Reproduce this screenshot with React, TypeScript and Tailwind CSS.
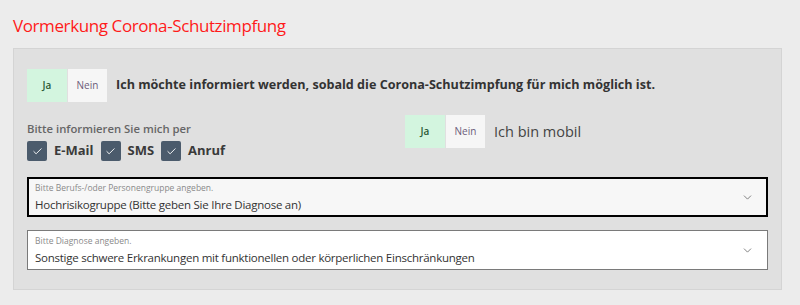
import { ChevronDown, Check } from "lucide-react";

const font = { fontFamily: '"Open Sans", "Noto Sans", sans-serif' };

const Toggle = () => (
  <div className="flex h-[33px] shrink-0">
    <button className="w-[40px] bg-[#d3f5df] text-[10px] font-semibold text-[#2d5a36]">Ja</button>
    <button className="ml-px w-[39px] bg-[#f6f6f6] text-[10px] text-[#6b5b7b]">Nein</button>
  </div>
);

const Box = ({ label }: { label: string }) => (
  <label className="flex items-center gap-[7px]">
    <span className="flex h-[20px] w-[20px] items-center justify-center rounded-[2px] bg-[#4b5b6c]">
      <Check className="h-[11px] w-[11px] text-white" strokeWidth={2} />
    </span>
    <span className="text-[13px] font-bold text-[#3a3a3a]">{label}</span>
  </label>
);

const Select = ({ label, value, focused }: { label: string; value: string; focused?: boolean }) => (
  <div
    className={
      focused
        ? "flex h-[40px] items-center border-2 border-black bg-[#f7f7f7] pl-[6px] pr-[12px]"
        : "flex h-[40px] items-center border border-[#7a7a7a] bg-white pl-[7px] pr-[13px]"
    }
  >
    <div className="flex flex-1 flex-col leading-none">
      <span className="text-[8.5px] text-[#8a8a8a]">{label}</span>
      <span className="mt-[6px] text-[11.5px] tracking-[-0.25px] text-[#333]">{value}</span>
    </div>
    <ChevronDown className="h-[13px] w-[13px] text-[#666]" strokeWidth={1.5} />
  </div>
);

export default function App() {
  return (
    <div className="min-h-[305px] bg-[#ececec] px-[13px] pt-[14px]" style={font}>
      <h1 className="text-[17px] leading-[24px] tracking-[-0.4px] text-[#ff1a1a]">Vormerkung Corona-Schutzimpfung</h1>
      <div className="mt-[10px] w-[769px] border border-[#d4d4d4] bg-[#e0e0e0] px-[13px] pb-[19px] pt-[20px]">
        <div className="flex items-center gap-[9px]">
          <Toggle />
          <span className="text-[12.6px] font-bold text-[#333]">
            Ich möchte informiert werden, sobald die Corona-Schutzimpfung für mich möglich ist.
          </span>
        </div>
        <div className="mt-[13px] flex">
          <div className="w-[378px] pt-[7px]">
            <div className="text-[11.3px] font-semibold text-[#666] leading-[14px]">Bitte informieren Sie mich per</div>
            <div className="mt-[5px] flex gap-[7px]">
              <Box label="E-Mail" />
              <Box label="SMS" />
              <Box label="Anruf" />
            </div>
          </div>
          <div className="flex items-center gap-[9px] self-start">
            <Toggle />
            <span className="text-[14.5px] text-[#444]">Ich bin mobil</span>
          </div>
        </div>
        <div className="mt-[16px] flex flex-col gap-[13px]">
          <Select
            focused
            label="Bitte Berufs-/oder Personengruppe angeben."
            value="Hochrisikogruppe (Bitte geben Sie Ihre Diagnose an)"
          />
          <Select
            label="Bitte Diagnose angeben."
            value="Sonstige schwere Erkrankungen mit funktionellen oder körperlichen Einschränkungen"
          />
        </div>
      </div>
    </div>
  );
}
